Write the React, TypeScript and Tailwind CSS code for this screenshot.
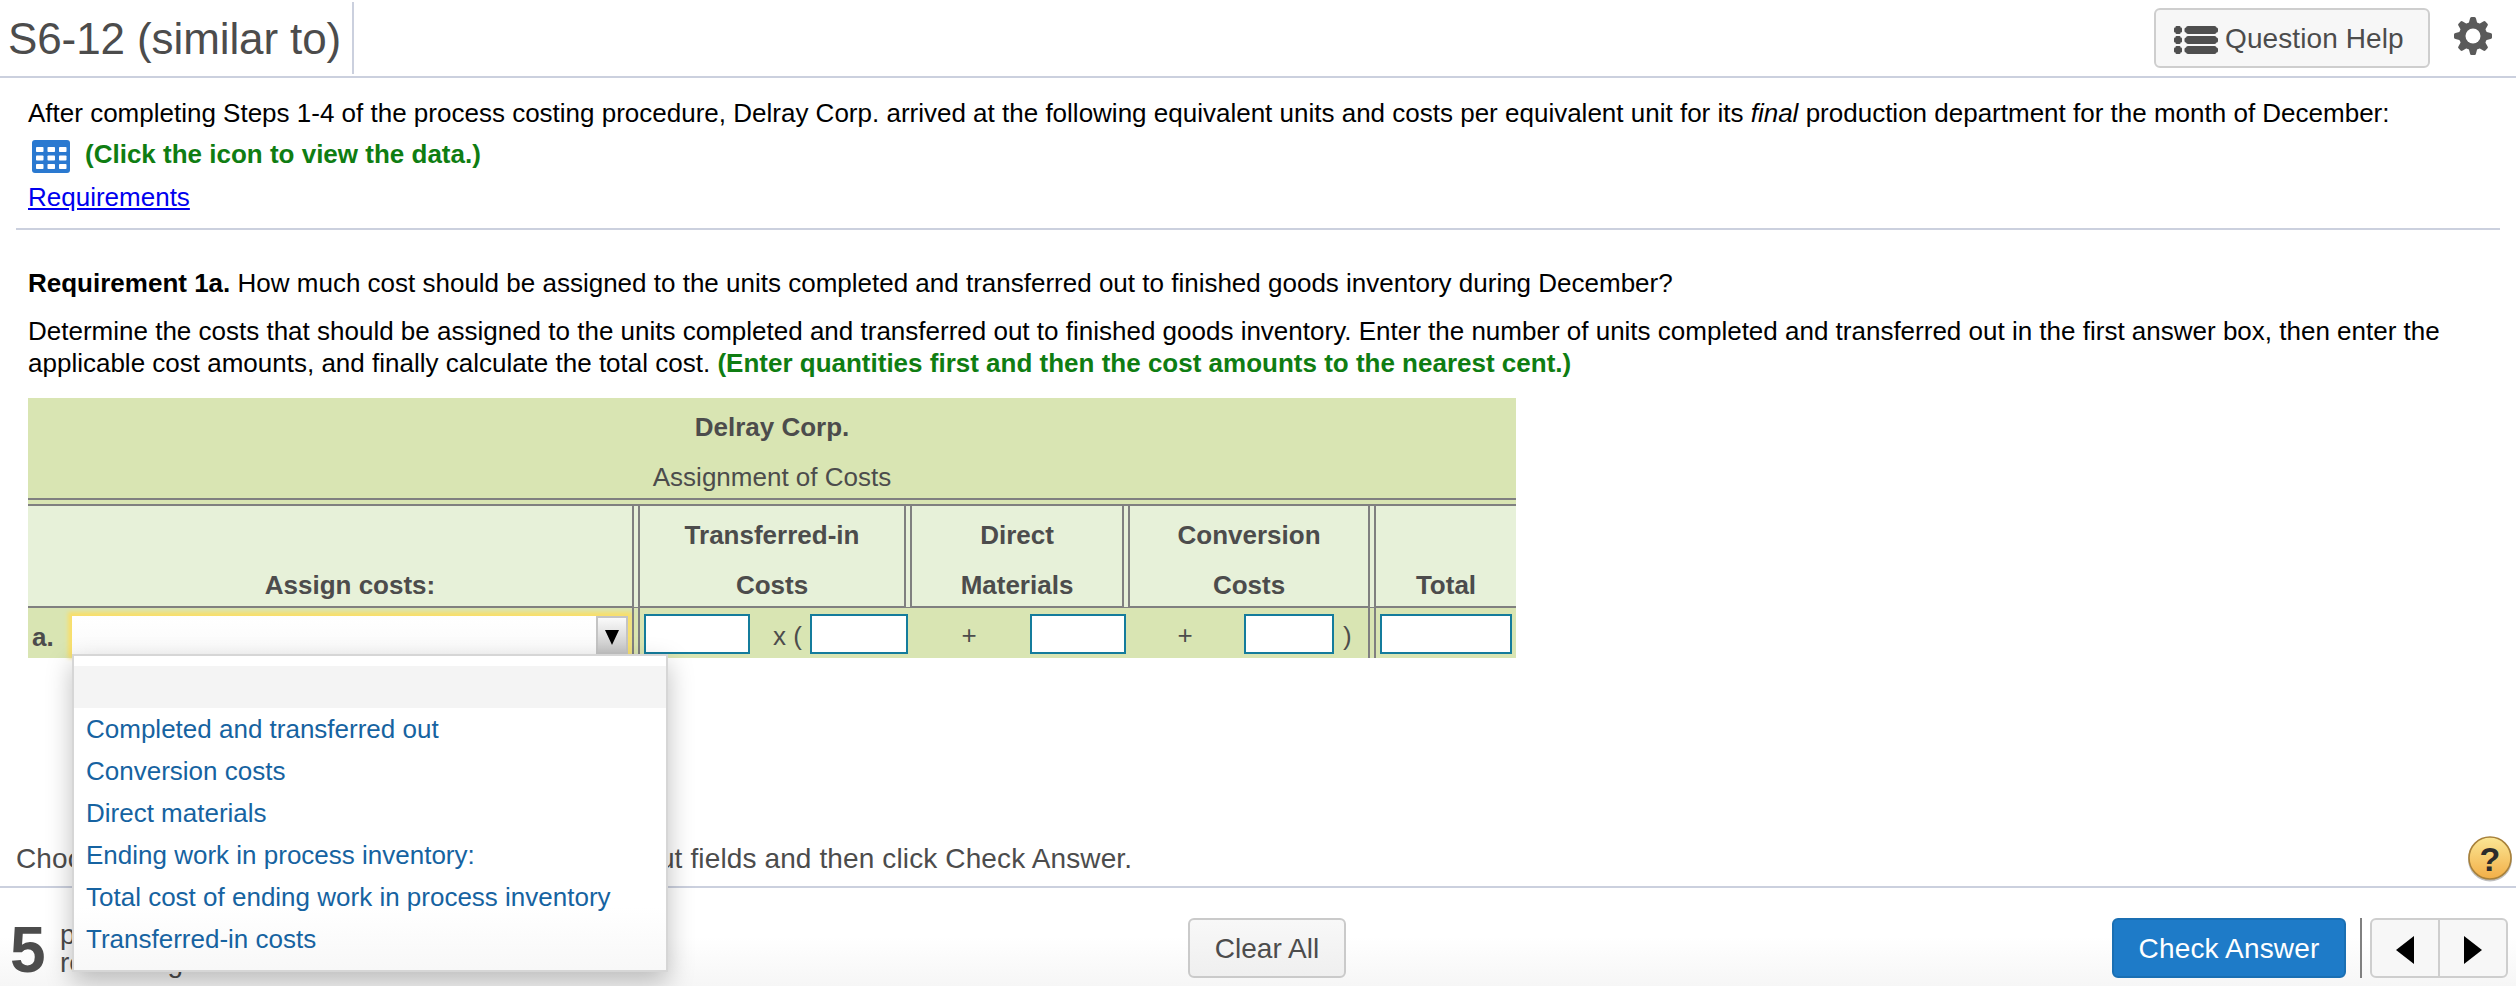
import React from "react";

const OPTIONS = [
  "Completed and transferred out",
  "Conversion costs",
  "Direct materials",
  "Ending work in process inventory:",
  "Total cost of ending work in process inventory",
  "Transferred-in costs",
];

function ListIcon() {
  return (
    <svg width="44" height="28" viewBox="0 0 44 28" fill="#4f4f4f" className="block">
      {[0, 10, 20].map((y) => (
        <g key={y}>
          <rect x="1.5" y={y} width="5" height="8" rx="1" />
          <rect x="0" y={y + 1.5} width="8" height="5" rx="1" />
          <rect x="12" y={y} width="30.5" height="8" rx="2" />
          <rect x="10.5" y={y + 1.5} width="33.5" height="5" rx="1.5" />
        </g>
      ))}
    </svg>
  );
}

function GearIcon() {
  return (
    <svg width="40" height="40" viewBox="-20 -20 40 40" className="block">
      <g fill="#5a5a5a">
        {[0, 45, 90, 135, 180, 225, 270, 315].map((a) => (
          <path key={a} transform={`rotate(${a})`} d="M-5 -10L-3 -17.5Q-2.8 -19 -1.5 -19H1.5Q2.8 -19 3 -17.5L5 -10z" />
        ))}
        <circle r="14" />
      </g>
      <circle r="7.5" fill="#fff" />
    </svg>
  );
}

function GridIcon() {
  return (
    <svg width="38" height="34" viewBox="0 0 38 34" className="block">
      <rect width="38" height="33" rx="3" fill="#2a79d0" />
      {[7, 15.5, 24].map((y) =>
        [4, 15.5, 27].map((x) => <rect key={`${x}-${y}`} x={x} y={y} width="7.5" height="5" rx=".8" fill="#fff" />),
      )}
    </svg>
  );
}

function HelpBadge() {
  return (
    <svg width="48" height="50" viewBox="-24 -24 48 50" className="block">
      <defs>
        <linearGradient id="gold" x1="0" y1="0" x2="0" y2="1">
          <stop offset="0" stopColor="#fbe795" />
          <stop offset="1" stopColor="#f2ae47" />
        </linearGradient>
      </defs>
      <circle cy="1.5" r="22" fill="#000" opacity=".25" />
      <circle r="21" fill="url(#gold)" stroke="#a8813a" strokeWidth="1.6" />
      <text y="13" textAnchor="middle" fontFamily="Liberation Sans, sans-serif" fontWeight="700" fontSize="34" fill="#2c2c2c">?</text>
    </svg>
  );
}

function Head({ lines, className }: { lines: string[]; className: string }) {
  return (
    <div className={`flex h-[102px] flex-col justify-end border-b-2 border-[#808080] bg-[#e7f1d9] text-center font-bold leading-[50px] ${className}`}>
      {lines.map((l) => (
        <div key={l} className="h-[50px] pt-1">{l}</div>
      ))}
    </div>
  );
}

function Gap() {
  return <div className="h-[102px] w-2 border-x-2 border-b border-[#808080] bg-[#e7f1d9]" />;
}

function Box({ className }: { className: string }) {
  return <div className={`mt-0.5 h-10 shrink-0 border-2 border-[#147c9c] bg-white ${className}`} />;
}

function RowGap() {
  return <div className="h-[50px] w-2 shrink-0 border-x-2 border-[#808080]" />;
}

export default function App() {
  return (
    <div className="relative flex h-[986px] w-[2516px] flex-col overflow-hidden bg-white font-['Liberation_Sans',Arial,sans-serif] text-[26px] leading-[32px] text-black">
      <header className="flex h-[78px] shrink-0 border-b-2 border-[#cbd0de] text-[#4c4c4c]">
        <div className="mt-0.5 flex h-[72px] w-[354px] items-center whitespace-nowrap border-r-2 border-[#cbd0de] pl-2 pt-0.5 text-[44px] tracking-[-0.1px]">
          S6-12 (similar to)
        </div>
        <div className="ml-auto mt-2 flex h-[60px] w-[276px] items-center rounded-md border-2 border-[#cecece] bg-[#f7f7f7] pl-[18px] text-[28px]">
          <div className="mt-1"><ListIcon /></div>
          <span className="ml-[7px] mt-px whitespace-nowrap tracking-[0.1px]">Question Help</span>
        </div>
        <div className="ml-[23px] mr-[23px] mt-4"><GearIcon /></div>
      </header>

      <section className="mx-4 h-[152px] shrink-0 border-b-2 border-[#cbd0de] pl-3 pt-[19px]">
        <p className="whitespace-nowrap">
          After completing Steps 1-4 of the process costing procedure, Delray Corp. arrived at the following equivalent units and costs per equivalent unit for its <i>final</i> production department for the month of December:
        </p>
        <div className="mt-[9px] flex h-8">
          <div className="ml-1 mt-0.5"><GridIcon /></div>
          <b className="ml-[15px] text-[#0f7d12]">(Click the icon to view the data.)</b>
        </div>
        <div className="mt-[11px] text-[#0000ee] underline">Requirements</div>
      </section>

      <section className="px-7 pt-[37px]">
        <p><b>Requirement 1a.</b> How much cost should be assigned to the units completed and transferred out to finished goods inventory during December?</p>
        <p className="mt-4 whitespace-nowrap">
          Determine the costs that should be assigned to the units completed and transferred out to finished goods inventory. Enter the number of units completed and transferred out in the first answer box, then enter the<br />
          applicable cost amounts, and finally calculate the total cost. <b className="text-[#0f7d12]">(Enter quantities first and then the cost amounts to the nearest cent.)</b>
        </p>

        <div className="mt-[19px] w-[1488px] bg-[#d9e5b3] text-[#4c4c4c]">
          <div className="h-[102px] border-b-2 border-[#808080] pt-1 text-center leading-[50px]">
            <div className="font-bold">Delray Corp.</div>
            <div>Assignment of Costs</div>
          </div>
          <div className="mt-1 border-t-2 border-[#808080]">
            <div className="flex">
              <Head lines={["Assign costs:"]} className="w-[604px] pl-10" />
              <Gap />
              <Head lines={["Transferred-in", "Costs"]} className="w-[264px]" />
              <Gap />
              <Head lines={["Direct", "Materials"]} className="w-[210px]" />
              <Gap />
              <Head lines={["Conversion", "Costs"]} className="w-[238px]" />
              <Gap />
              <Head lines={["Total"]} className="w-[140px]" />
            </div>
            <div className="flex h-[50px] items-center">
              <div className="flex h-full w-[604px] shrink-0">
                <b className="w-11 pl-1 pt-[13px]">a.</b>
                <div className="mt-2 flex h-[38px] w-[556px] bg-gradient-to-b from-white to-[#fafafa] shadow-[0_0_4px_4px_#f9df6a]">
                  <div className="ml-auto flex w-8 items-center justify-center border-2 border-[#c4c4c4] bg-gradient-to-b from-[#fafafa] to-[#c6c6c6] pt-1">
                    <svg width="14" height="15" viewBox="0 0 14 15"><path d="M0 0H14L7 15z" /></svg>
                  </div>
                </div>
              </div>
              <RowGap />
              <Box className="ml-1 w-[106px]" />
              <span className="ml-[23px] mt-[5px] w-[37px] whitespace-nowrap">x (</span>
              <Box className="w-[98px]" />
              <span className="mt-[3px] w-[122px] text-center">+</span>
              <Box className="w-[96px]" />
              <span className="mt-[3px] w-[118px] text-center">+</span>
              <Box className="w-[90px]" />
              <span className="mt-[5px] w-[34px] pl-[9px]">)</span>
              <RowGap />
              <Box className="ml-1 w-[132px]" />
            </div>
          </div>
        </div>
      </section>

      <div className="mt-auto flex h-[46px] shrink-0 items-start pl-4 text-[28px] text-[#4c4c4c]">
        <p className="mt-[3px] whitespace-nowrap tracking-[0.125px]">Choose from any list or enter any number in the input fields and then click Check Answer.</p>
        <div className="-mt-1.5 ml-auto mr-0.5"><HelpBadge /></div>
      </div>
      <footer className="flex h-[100px] shrink-0 items-start border-t-2 border-[#cbd0de] bg-gradient-to-b from-white via-white to-[#f6f6f6] pt-[30px] text-[28px] text-[#4c4c4c]">
        <b className="ml-[10px] mt-0.5 w-[50px] text-[64px] leading-[60px]">5</b>
        <div className="mt-[3px] leading-[28px]">
          <div>parts</div>
          <div>remaining</div>
        </div>
        <div className="ml-auto flex h-[60px]">
          <div className="mr-[766px] flex w-[158px] items-center justify-center rounded-md border-2 border-[#cacaca] bg-gradient-to-b from-[#f8f8f8] to-[#efefef] pt-px">Clear All</div>
          <div className="flex w-[234px] items-center justify-center rounded-md border-2 border-[#1a6fb3] bg-[#1e7bc8] pt-px tracking-[0.15px] text-white">Check Answer</div>
          <div className="ml-[14px] w-0.5 bg-[#808080]" />
          <div className="ml-2 mr-2 flex w-[138px] rounded-md border-2 border-[#cecece] bg-[#f7f7f7]">
            <div className="flex w-[68px] items-center border-r-2 border-[#cecece] pl-6 pt-1">
              <svg width="18" height="28" viewBox="0 0 18 28"><path d="M18 0V28L0 14z" fill="#000" /></svg>
            </div>
            <div className="flex items-center pl-6 pt-1">
              <svg width="18" height="28" viewBox="0 0 18 28"><path d="M0 0V28L18 14z" fill="#000" /></svg>
            </div>
          </div>
        </div>
      </footer>

      <ul className="absolute left-[72px] top-[654px] h-[318px] w-[596px] border-2 border-[#d6d6d6] bg-gradient-to-b from-white from-80% to-[#f8f8f8] pt-[10px] leading-[42px] text-[#1663a1] shadow-[0_10px_24px_rgba(0,0,0,0.25)]">
        <li className="h-[42px] bg-[#f4f4f4]" />
        {OPTIONS.map((o) => (
          <li key={o} className="h-[42px] whitespace-nowrap pl-3">{o}</li>
        ))}
      </ul>
    </div>
  );
}
